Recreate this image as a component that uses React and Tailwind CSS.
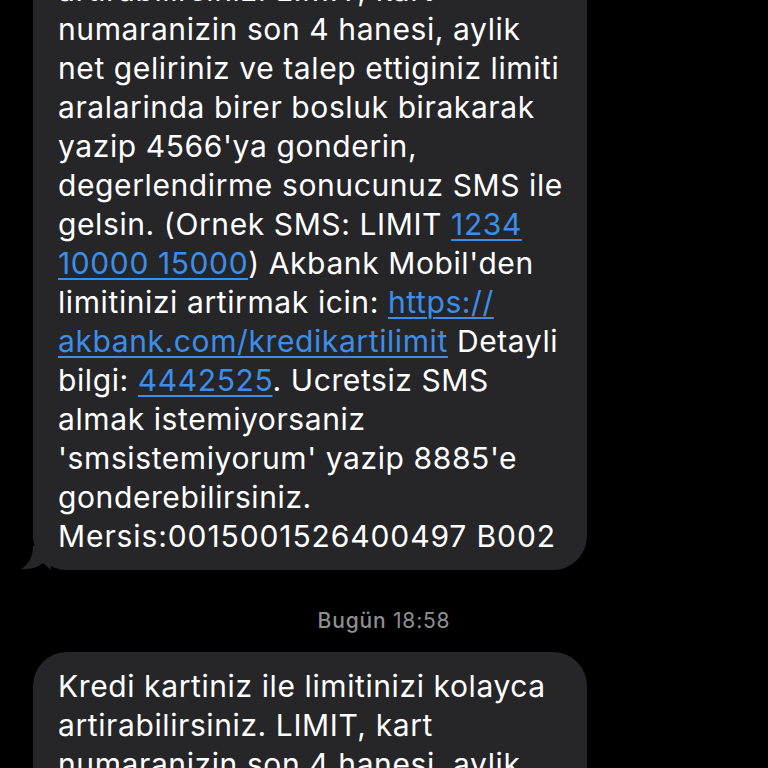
import React from "react";

const Link = ({ children }) => (
  <span className="text-[#3b8fea] underline decoration-[2px] underline-offset-[4px]">{children}</span>
);

function Tail() {
  return (
    <svg
      className="absolute left-[-12px] bottom-0"
      width="30"
      height="24"
      viewBox="0 0 30 24"
    >
      <path d="M12 0 C12 10 8 18 0 23 C8 24 16 22 22 17 L30 24 L30 0 Z" fill="#262629" />
    </svg>
  );
}

function Bubble({ lines, tail }) {
  return (
    <div className="relative w-[554px] ml-[33px] bg-[#262629] rounded-[34px] pl-[25px] pr-[20px] pt-[15px] pb-[14px] text-white text-[30px] leading-[39px] tracking-[0.6px]">
      {lines.map((l, i) => (
        <div key={i} className="whitespace-nowrap">
          {l}
        </div>
      ))}
      {tail && <Tail />}
    </div>
  );
}

const first = [
  "artirabilirsiniz. LIMIT, kart",
  "numaranizin son 4 hanesi, aylik",
  "net geliriniz ve talep ettiginiz limiti",
  "aralarinda birer bosluk birakarak",
  "yazip 4566'ya gonderin,",
  "degerlendirme sonucunuz SMS ile",
  <>
    gelsin. (Ornek SMS: LIMIT <Link>1234</Link>
  </>,
  <>
    <Link>10000 15000</Link>) Akbank Mobil'den
  </>,
  <>
    limitinizi artirmak icin: <Link>https://</Link>
  </>,
  <>
    <Link>akbank.com/kredikartilimit</Link> Detayli
  </>,
  <>
    bilgi: <Link>4442525</Link>. Ucretsiz SMS
  </>,
  "almak istemiyorsaniz",
  "'smsistemiyorum' yazip 8885'e",
  "gonderebilirsiniz.",
  <span className="tracking-[0.9px]">Mersis:0015001526400497 B002</span>,
];

const second = [
  "Kredi kartiniz ile limitinizi kolayca",
  "artirabilirsiniz. LIMIT, kart",
  "numaranizin son 4 hanesi, aylik",
  "net geliriniz ve talep ettiginiz limiti",
];

export default function App() {
  return (
    <div
      className="w-[768px] h-[768px] overflow-hidden bg-black"
      style={{ fontFamily: "Inter, 'Noto Sans', sans-serif" }}
    >
      <div className="-mt-[44px] flex flex-col">
        <Bubble lines={first} tail />
        <div className="mt-[39px] mb-[19px] text-center text-[21px] leading-[24px] tracking-[0.8px] text-[#8e8e93]">
          <span className="font-medium">Bugün</span> 18:58
        </div>
        <Bubble lines={second} />
      </div>
    </div>
  );
}
